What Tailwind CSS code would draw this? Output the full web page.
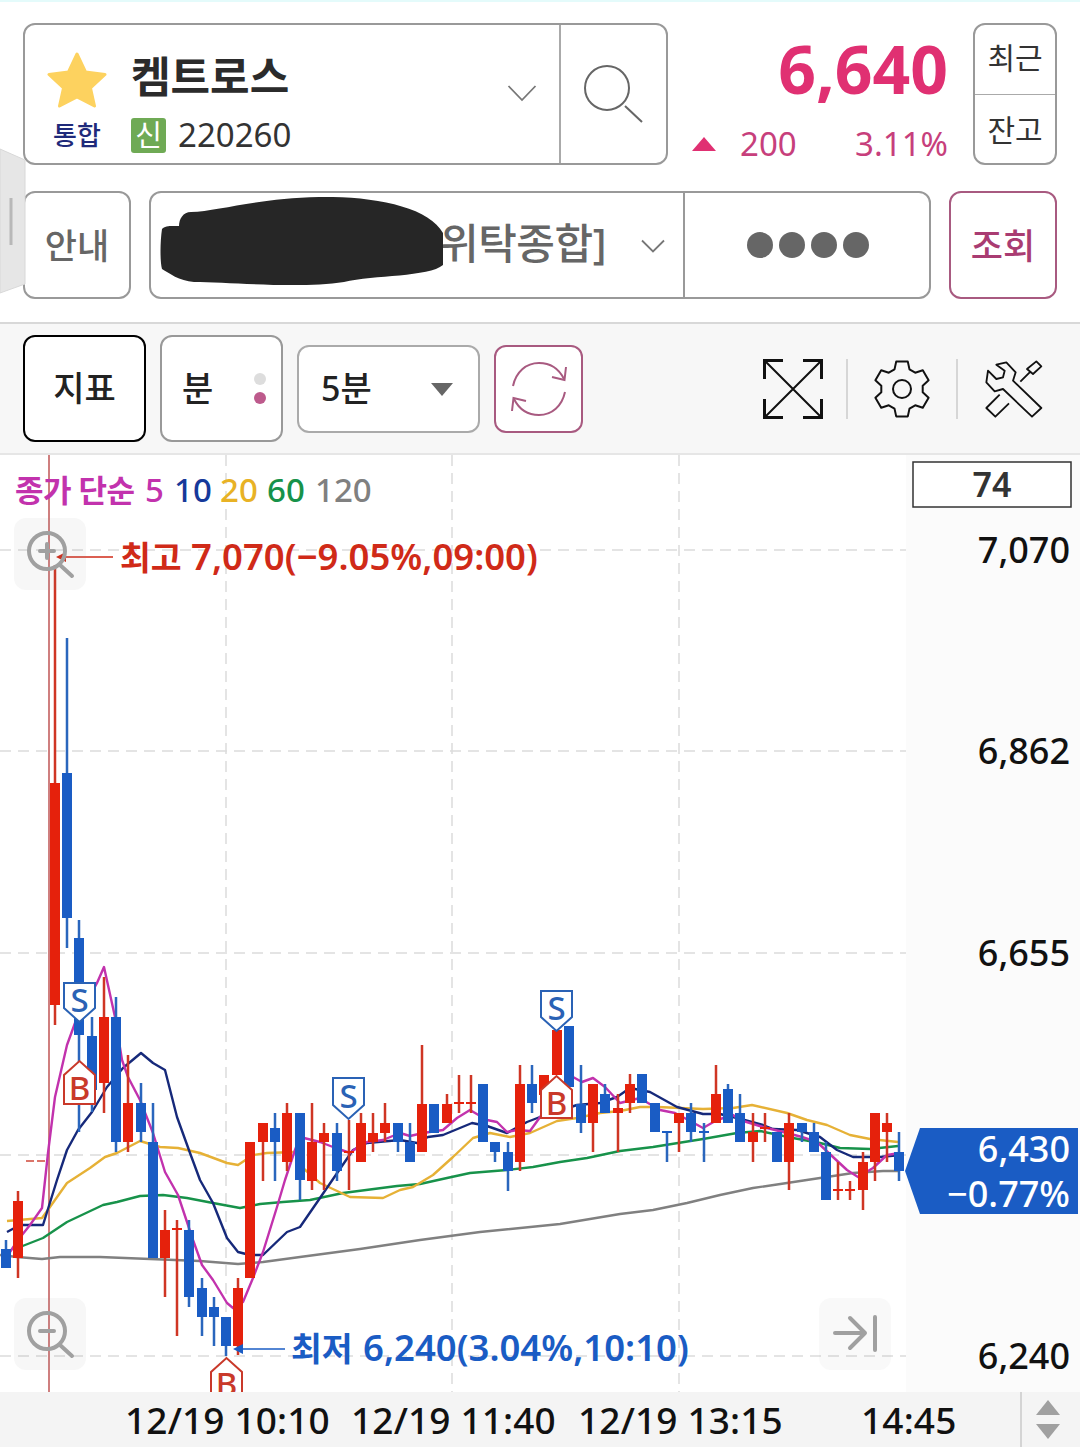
<!DOCTYPE html>
<html lang="ko">
<head>
  <meta charset="UTF-8">
  <title>켐트로스 차트</title>
  <script src="https://cdn.jsdelivr.net/npm/@tailwindcss/browser@4"></script>
</head>
<body class="bg-white font-['Noto_Sans','Noto_Sans_CJK_KR',sans-serif]">
<div class="relative w-[1080px] h-[1447px] overflow-hidden flex flex-col">
  <div class="h-[2px] bg-[#e4fbfb]"></div>

  <!-- stock header -->
  <div class="mt-[21px] h-[142px] pl-[23px] flex">
    <div class="w-[645px] border-2 border-[#999] rounded-[12px] flex">
      <div class="w-[534px] flex relative">
        <div class="w-[106px] flex flex-col items-center">
          <svg class="mt-[27px] mr-[3px]" width="60" height="56" viewBox="0 0 60 56"><path d="M30 2 38.5 20 58 22.5 43.500 36 47.500 54 30 45 12.500 54 16.500 36 2 22.500 21.500 20Z" fill="#fdd25f" stroke="#fdd25f" stroke-width="3" stroke-linejoin="round"/></svg>
          <span class="mt-[10px] mr-[2px] text-[26px] leading-[34px] text-[#1f2a7a] font-medium">통합</span>
        </div>
        <div class="flex flex-col">
          <span class="mt-[23px] text-[43px] leading-[58px] font-bold text-[#2b2b2b] tracking-[0px]">켐트로스</span>
          <div class="mt-[11px] flex items-center">
            <span class="w-[35px] h-[35px] bg-[#6faa55] rounded-[3px] text-white text-[29px] leading-[33px] text-center">신</span>
            <span class="ml-[12px] text-[33px] leading-[36px] text-[#333]">220260</span>
          </div>
        </div>
        <svg class="absolute left-[482px] top-[59px]" width="30" height="18" viewBox="0 0 30 18"><path d="M1.500 2 15 16 28.500 2" fill="none" stroke="#777" stroke-width="1.800"/></svg>
      </div>
      <div class="flex-1 border-l-2 border-[#aaa] flex items-center justify-center">
        <svg class="mt-[2px]" width="60" height="60" viewBox="0 0 60 60"><circle cx="23" cy="23" r="22" fill="none" stroke="#666" stroke-width="2"/><path d="M41 41 58 57" stroke="#666" stroke-width="2"/></svg>
      </div>
    </div>
    <div class="w-[280px] flex flex-col items-end">
      <span class="text-[66px] leading-[90px] font-bold text-[#e03072]">6,640</span>
      <div class="mt-[9px] w-full flex items-center pl-[24px] text-[33px] leading-[44px] text-[#c73f7c]">
        <svg width="24" height="14" viewBox="0 0 24 14"><path d="M12 0 24 14H0Z" fill="#e03072"/></svg>
        <span class="ml-[24px]">200</span>
        <span class="ml-auto">3.11%</span>
      </div>
    </div>
    <div class="ml-[25px] w-[84px] border-2 border-[#999] rounded-[12px] flex flex-col text-[#333] text-[30px]">
      <div class="h-[70px] pb-[4px] border-b border-[#aaa] flex items-center justify-center">최근</div>
      <div class="flex-1 flex items-center justify-center">잔고</div>
    </div>
  </div>

  <!-- account row -->
  <div class="mt-[26px] h-[108px] pl-[23px] flex gap-[18px]">
    <div class="w-[108px] border-2 border-[#999] rounded-[12px] flex items-center justify-center pt-[2px] text-[35px] font-medium text-[#666]">안내</div>
    <div class="w-[782px] border-2 border-[#999] rounded-[12px] flex">
      <div class="w-[534px] relative flex items-center border-r-2 border-[#999]">
        <span class="absolute right-[77px] top-[20px] text-[42px] leading-[60px] font-medium text-[#666] tracking-[-0.500px]">위탁종합]</span>
        <svg class="absolute left-[8px] top-[4px]" width="286" height="92" viewBox="0 0 286 92"><path d="M32 15C60 14 100 1 160 0 215-1 270 10 284 36V68C270 80 215 78 185 85 140 92 70 85 35 85 20 84 10 76 3 72 1 65 1 45 3 32 6 28 15 29 20 29 20 22 24 15 32 15Z" fill="#262626"/></svg>
        <svg class="absolute right-[18px] top-[46px]" width="24" height="14" viewBox="0 0 24 14"><path d="M1 1.500 12 12.500 23 1.500" fill="none" stroke="#777" stroke-width="1.800"/></svg>
      </div>
      <div class="flex-1 flex items-center justify-center gap-[6px] pl-[2px]">
        <span class="w-[26px] h-[26px] rounded-full bg-[#666]"></span>
        <span class="w-[26px] h-[26px] rounded-full bg-[#666]"></span>
        <span class="w-[26px] h-[26px] rounded-full bg-[#666]"></span>
        <span class="w-[26px] h-[26px] rounded-full bg-[#666]"></span>
      </div>
    </div>
    <div class="w-[108px] border-2 border-[#a85a80] rounded-[12px] flex items-center justify-center pt-[2px] text-[35px] text-[#a93c72] font-medium">조회</div>
  </div>

  <!-- toolbar -->
  <div class="mt-[23px] h-[133px] bg-[#f7f7f7] border-t-2 border-b-2 border-t-[#d8d8d8] border-b-[#e6e6e6] pl-[23px] flex items-center">
    <div class="w-[123px] h-[107px] bg-white border-2 border-black rounded-[12px] flex items-center justify-center text-[34px] font-medium text-[#222]">지표</div>
    <div class="ml-[14px] w-[123px] h-[107px] bg-white border-2 border-[#999] rounded-[12px] relative flex items-center pl-[20px] text-[34px] font-medium text-[#222]">
      분
      <span class="absolute left-[92px] top-[36px] w-[12px] h-[12px] rounded-full bg-[#ddd]"></span>
      <span class="absolute left-[92px] top-[55px] w-[12px] h-[12px] rounded-full bg-[#bd5a8c]"></span>
    </div>
    <div class="ml-[14px] w-[183px] h-[88px] bg-white border-2 border-[#aaa] rounded-[12px] flex items-center pl-[22px] text-[34px] font-medium text-[#222] relative">
      5분
      <svg class="absolute left-[132px] top-[36px]" width="22" height="13" viewBox="0 0 22 13"><path d="M0 0H22L11 13Z" fill="#666"/></svg>
    </div>
    <div class="ml-[14px] w-[89px] h-[88px] bg-white border-2 border-[#a85a80] rounded-[12px] flex items-center justify-center">
      <svg width="60" height="60" viewBox="0 0 60 60" fill="none" stroke="#a85a80" stroke-width="2"><path d="M4 27C7 13 17 4 30 4 42 4 50 10 55 20"/><path d="M57 8 55.500 21 43 18"/><path d="M56 33C53 47 43 56 30 56 18 56 10 50 5 40"/><path d="M3 52 4.500 39 17 42"/></svg>
    </div>
    <svg class="ml-[180px]" width="60" height="60" viewBox="0 0 60 60" fill="none" stroke="#111"><path d="M1.500 20V1.500H20M40 1.500H58.500V20M1.500 40V58.500H20M58.500 40V58.500H40" stroke-width="3"/><path d="M2 2 58 58M58 2 2 58" stroke-width="2"/></svg>
    <div class="ml-[23px] w-[2px] h-[60px] bg-[#d6d6d6]"></div>
    <svg class="ml-[24px]" width="60" height="60" viewBox="0 0 60 60" fill="none" stroke="#111" stroke-width="2" stroke-linejoin="round"><path id="gear-path"/><circle cx="30" cy="30" r="9"/></svg>
    <div class="ml-[24px] w-[2px] h-[60px] bg-[#d6d6d6]"></div>
    <svg class="ml-[25px]" width="60" height="60" viewBox="1150 115 180 180" fill="none" stroke="#111" stroke-width="5.500" stroke-linejoin="round"><path d="M1190 132 1220 125 1248 155 1240 180 1325 262 1297 288 1210 205 1185 212 1160 185 1165 150 1190 175 1210 170 1215 150Z"/><path d="M1200 222 1160 262 1187 288 1228 248"/><path d="M1262 183 1290 155M1282 145 1310 122 1325 137 1300 160Z"/></svg>
  </div>

  <!-- chart canvas -->
  <div class="relative h-[937px]">
    <svg id="chart" class="absolute inset-0" width="1080" height="937" viewBox="0 455 1080 937">
      <rect x="906" y="455" width="174" height="937" fill="#fbfbfb"/>
      <g stroke="#dcdcdc" stroke-width="1.500" stroke-dasharray="11 7">
        <path d="M0 550H906M0 751H906M0 953H906M0 1155H906M0 1356H906"/>
        <path d="M226 455V1392M452 455V1392M679 455V1392"/>
      </g>
      <path d="M49 455V1392" stroke="#cf7f7f" stroke-width="2"/>
      <path d="M26 1161H48" stroke="#d0483a" stroke-width="1.500" stroke-dasharray="8 3"/>
      <g id="lines" fill="none" stroke-width="2.400" stroke-linejoin="round"></g>
      <g id="candles"></g>

      <!-- buy / sell markers -->
      <g fill="#fff" stroke="#2a62b5" stroke-width="2">
        <path d="M64 983H95V1008L79.500 1022 64 1008Z"/>
        <path d="M333 1078H364V1105L348.500 1119 333 1105Z"/>
        <path d="M541 991H572V1017L556.500 1031 541 1017Z"/>
      </g>
      <g fill="#fff" stroke="#c9392a" stroke-width="2">
        <path d="M64 1104H95V1075L79.500 1061 64 1075Z"/>
        <path d="M541 1118H572V1090L556.500 1076 541 1090Z"/>
        <path d="M211 1400V1372L226.500 1358 242 1372V1400Z"/>
      </g>
      <g font-size="33" font-weight="500" text-anchor="middle" fill="#2a62b5">
        <text x="79.500" y="1012">S</text>
        <text x="348.500" y="1108">S</text>
        <text x="556.500" y="1020">S</text>
      </g>
      <g font-size="33" font-weight="500" text-anchor="middle" fill="#c9392a">
        <text x="79.500" y="1100">B</text>
        <text x="556.500" y="1115">B</text>
        <text x="226.500" y="1396">B</text>
      </g>

      <!-- legend -->
      <g font-size="33" font-weight="500">
        <text x="15" y="502" font-size="31" fill="#c232ad" font-weight="700" letter-spacing="-0.500">종가 단순</text>
        <text x="145" y="502" fill="#c232ad">5</text>
        <text x="174" y="502" fill="#16399a">10</text>
        <text x="220" y="502" fill="#e8b225">20</text>
        <text x="267" y="502" fill="#17924a">60</text>
        <text x="315" y="502" fill="#808080">120</text>
      </g>

      <!-- high / low callouts -->
      <path d="M113 557H66" stroke="#d02a18" stroke-width="1.500"/>
      <path d="M56 557 66 552V562Z" fill="#d02a18"/>
      <text x="120" y="570" font-size="33.500" font-weight="700" fill="#d02a18">최고</text>
      <text x="191" y="570" font-size="36.500" font-weight="600" fill="#d02a18">7,070(−9.05%,09:00)</text>
      <path d="M285 1349H243" stroke="#1a5cc4" stroke-width="1.500"/>
      <path d="M233 1349 243 1344V1354Z" fill="#1a5cc4"/>
      <text x="291" y="1361" font-size="33.500" font-weight="700" fill="#1a5cc4">최저</text>
      <text x="363" y="1361" font-size="36.500" font-weight="600" fill="#1a5cc4">6,240(3.04%,10:10)</text>

      <!-- floating zoom buttons -->
      <rect x="14" y="518" width="72" height="72" rx="12" fill="#888" fill-opacity="0.07"/>
      <g fill="none" stroke="#a0a0a0" stroke-width="4" stroke-linecap="round">
        <circle cx="47" cy="551" r="18"/><path d="M40 551H54M47 544V558M60 565 72 576"/>
      </g>
      <rect x="14" y="1298" width="72" height="72" rx="12" fill="#888" fill-opacity="0.07"/>
      <g fill="none" stroke="#a0a0a0" stroke-width="4" stroke-linecap="round">
        <circle cx="47" cy="1331" r="18"/><path d="M40 1331H54M60 1345 72 1356"/>
      </g>
      <rect x="819" y="1298" width="72" height="72" rx="12" fill="#888" fill-opacity="0.05"/>
      <path d="M835 1333H865M850 1318 865 1333 850 1348M875 1317V1350" fill="none" stroke="#a0a0a0" stroke-width="4" stroke-linecap="round" stroke-linejoin="round"/>

      <!-- price axis -->
      <rect x="913" y="462" width="158" height="45" fill="#fff" stroke="#333" stroke-width="1.500"/>
      <text x="992" y="497" text-anchor="middle" font-size="34" font-weight="600" fill="#333">74</text>
      <g font-size="36" font-weight="500" text-anchor="end" fill="#111">
        <text x="1070" y="563">7,070</text>
        <text x="1070" y="764">6,862</text>
        <text x="1070" y="966">6,655</text>
        <text x="1070" y="1369">6,240</text>
      </g>
      <path d="M920 1128H1078V1214H920L905 1171Z" fill="#1a5cc4"/>
      <g font-size="36" font-weight="500" text-anchor="end" fill="#fff">
        <text x="1070" y="1162">6,430</text>
        <text x="1070" y="1207">−0.77%</text>
      </g>
    </svg>
  </div>

  <!-- time axis -->
  <div class="relative h-[55px] bg-[#f4f4f4] text-[37px] leading-[55px] font-medium text-[#111] tracking-[0.150px]">
    <span class="absolute left-[125px]">12/19 10:10</span>
    <span class="absolute left-[351px]">12/19 11:40</span>
    <span class="absolute left-[578px]">12/19 13:15</span>
    <span class="absolute left-[861px]">14:45</span>
    <div class="absolute left-[1020px] top-0 bottom-0 w-[2px] bg-[#d4d4d4]"></div>
    <svg class="absolute left-[1036px] top-[8px]" width="24" height="40" viewBox="0 0 24 40" fill="#a0a0a0"><path d="M12 0 24 15H0Z"/><path d="M0 24H24L12 39Z"/></svg>
  </div>

  <!-- side drawer tab -->
  <svg class="absolute left-0 top-[148px]" width="26" height="146" viewBox="0 0 26 146"><path d="M0 1 25 12V136L0 145Z" fill="#e6e6e6" stroke="#d8d8d8"/><path d="M11 50V97" stroke="#b8b8b8" stroke-width="3"/></svg>
</div>

<script>
// [x, wickTop, wickBottom, bodyTop, bodyBottom]
const reds = [
  [18,1191,1278,1201,1258],[55,565,1025,783,1005],[104,977,1113,1017,1083],[128,1055,1152,1103,1142],
  [165,1210,1297,1230,1258],[177,1220,1336,1228,1230],[238,1278,1355,1288,1346],[250,1142,1278,1142,1278],
  [263,1123,1181,1123,1142],[287,1103,1171,1113,1162],[312,1103,1190,1142,1181],[324,1123,1190,1133,1142],
  [349,1120,1190,1151,1153],[361,1113,1162,1123,1162],[373,1113,1152,1133,1142],[385,1103,1142,1123,1133],
  [422,1045,1152,1104,1152],[447,1094,1123,1104,1123],[459,1075,1113,1102,1104],[471,1075,1113,1102,1104],
  [520,1065,1171,1084,1162],[544,1075,1095,1075,1095],[557,1030,1075,1030,1075],[593,1084,1152,1084,1123],
  [618,1094,1152,1108,1113],[630,1074,1113,1084,1103],[679,1113,1152,1113,1123],[716,1065,1123,1094,1123],
  [753,1113,1162,1132,1142],[765,1113,1142,1127,1129],[789,1113,1190,1123,1162],[838,1162,1200,1189,1191],
  [850,1181,1200,1189,1191],[863,1152,1210,1162,1190],[875,1113,1181,1113,1162],[887,1113,1162,1123,1132]
];
const blues = [
  [6,1240,1268,1249,1268],[67,638,948,773,918],[79,920,1132,938,1035],[92,1017,1112,1036,1090],
  [116,997,1152,1017,1142],[141,1083,1142,1103,1132],[153,1103,1258,1142,1258],[189,1220,1307,1230,1297],
  [202,1278,1336,1288,1317],[214,1297,1346,1307,1317],[226,1317,1356,1317,1346],[275,1113,1181,1128,1142],
  [300,1113,1200,1113,1180],[337,1123,1181,1133,1171],[398,1123,1152,1123,1142],[410,1123,1162,1142,1162],
  [434,1104,1133,1104,1133],[483,1084,1142,1084,1142],[495,1142,1162,1142,1152],[508,1142,1191,1152,1171],
  [532,1065,1113,1084,1103],[569,1026,1087,1026,1087],[581,1065,1133,1104,1123],[605,1084,1113,1094,1113],
  [642,1074,1103,1074,1103],[655,1103,1132,1103,1132],[667,1132,1162,1131,1133],[691,1103,1142,1113,1132],
  [704,1123,1162,1131,1133],[728,1084,1123,1089,1123],[740,1094,1142,1113,1142],[777,1132,1162,1132,1162],
  [802,1123,1142,1123,1132],[814,1123,1152,1132,1152],[826,1142,1200,1152,1200],[899,1132,1181,1152,1171]
];
const averages = {
  '#808080': '0,1255 17,1257 42,1259 60,1257 100,1257 150,1259 200,1261 238,1264 263,1262 300,1257 360,1249 420,1240 480,1232 560,1224 620,1214 653,1210 687,1203 720,1195 753,1188 787,1183 820,1178 853,1173 883,1171 898,1171',
  '#17924a': '20,1247 43,1238 67,1222 103,1205 117,1202 140,1196 163,1195 187,1198 213,1203 240,1208 260,1204 283,1202 310,1200 343,1193 397,1186 420,1184 447,1178 470,1173 507,1170 533,1167 560,1162 587,1158 620,1151 653,1147 703,1139 737,1133 760,1131 793,1138 820,1143 840,1148 870,1149 898,1146',
  '#e6b136': '7,1221 42,1218 50,1207 67,1183 90,1168 105,1157 117,1153 140,1141 160,1147 178,1148 200,1153 227,1163 238,1165 253,1155 267,1153 295,1152 303,1168 320,1183 350,1197 383,1198 400,1190 413,1187 433,1175 453,1157 473,1138 490,1133 510,1137 530,1133 557,1121 577,1118 600,1113 620,1111 640,1107 658,1107 680,1108 703,1109 733,1108 752,1105 787,1113 807,1120 827,1125 850,1135 870,1139 898,1142',
  '#16297a': '7,1232 20,1225 43,1225 57,1180 67,1150 78,1130 92,1112 107,1087 123,1068 141,1053 153,1063 165,1070 177,1117 190,1153 200,1180 213,1203 227,1238 238,1252 250,1255 263,1255 287,1232 300,1227 320,1198 353,1150 367,1143 400,1140 417,1143 428,1137 443,1135 472,1123 487,1126 507,1133 527,1122 540,1117 577,1105 600,1103 617,1097 630,1088 650,1092 677,1107 703,1114 720,1114 737,1118 763,1125 773,1129 797,1130 820,1137 837,1150 853,1157 880,1157 900,1155',
  '#c232ad': '6,1258 18,1240 30,1225 42,1208 48,1153 55,1097 67,1045 75,1023 97,983 104,967 115,1017 122,1060 128,1077 140,1100 153,1133 165,1172 178,1195 193,1240 202,1265 213,1280 227,1303 233,1308 243,1302 253,1278 263,1252 277,1207 285,1180 295,1150 300,1137 320,1142 333,1147 350,1153 358,1147 367,1142 383,1140 400,1133 410,1136 423,1133 443,1130 457,1118 470,1110 487,1120 497,1122 507,1132 517,1130 530,1131 543,1113 557,1093 573,1077 582,1082 593,1078 605,1087 620,1103 640,1098 648,1103 660,1110 675,1113 692,1122 703,1128 717,1120 733,1115 740,1120 763,1127 787,1133 802,1137 817,1142 833,1157 847,1170 858,1177 873,1168 887,1155 900,1153'
};
const ns = 'http://www.w3.org/2000/svg';
const make = (tag, attrs) => {
  const el = document.createElementNS(ns, tag);
  for (const k in attrs) el.setAttribute(k, attrs[k]);
  return el;
};
const linesGroup = document.getElementById('lines');
for (const color in averages) linesGroup.appendChild(make('polyline', { points: averages[color], stroke: color }));

const candlesGroup = document.getElementById('candles');
function drawCandles(list, wick, body) {
  list.forEach(([x, wt, wb, bt, bb]) => {
    candlesGroup.appendChild(make('rect', { x: x - 1.25, y: wt, width: 2.5, height: wb - wt, fill: wick }));
    candlesGroup.appendChild(make('rect', { x: x - 5, y: bt, width: 10, height: bb - bt, fill: body }));
  });
}
drawCandles(blues, '#2a66bd', '#1a5cc4');
drawCandles(reds, '#cf3524', '#e5210c');

// six tooth cog outline
const rad = d => d * Math.PI / 180;
const pt = (r, a) => `${(30 + r * Math.cos(rad(a))).toFixed(1)} ${(30 + r * Math.sin(rad(a))).toFixed(1)}`;
let d = '';
for (let i = 0; i < 6; i++) {
  const a = -90 + i * 60;
  d += `${i ? 'L' : 'M'}${pt(21, a - 21)}L${pt(28, a - 12)}L${pt(28, a + 12)}L${pt(21, a + 21)}`;
}
document.getElementById('gear-path').setAttribute('d', d + 'Z');
</script>
</body>
</html>
